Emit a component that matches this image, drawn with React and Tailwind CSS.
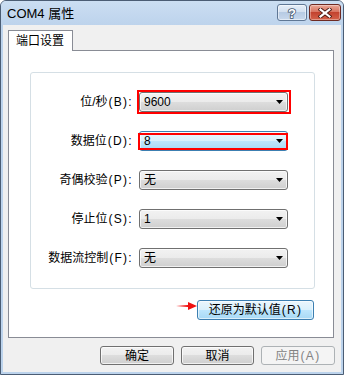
import React from "react";

const btnGray =
  "rounded-[3px] border border-[#707070] bg-[linear-gradient(to_bottom,#f2f2f2_0%,#ebebeb_50%,#dddddd_50%,#cfcfcf_100%)] shadow-[inset_0_0_0_1px_rgba(255,255,255,0.7)]";
const btnBlue =
  "rounded-[3px] border border-[#3c7fb1] bg-[linear-gradient(to_bottom,#eaf6fd_0%,#d9f0fc_50%,#bee6fd_50%,#a7d9f5_100%)] shadow-[inset_0_0_0_1px_rgba(255,255,255,0.6)]";

// half-width part of a label, spaced out like the old bitmap font
function Half({ children }) {
  return <span className="tracking-[1.3px] pl-[1px]">{children}</span>;
}

function Caret() {
  return (
    <svg width="7" height="4" viewBox="0 0 7 4" className="shrink-0">
      <path d="M0 0 H7 L3.5 4 Z" fill="#000" />
    </svg>
  );
}

function Combo({ value, focused }) {
  return (
    <div
      className={`h-[20px] w-[149px] flex items-center justify-between pl-[4px] pr-[4px] text-[12px] text-black ${
        focused ? btnBlue : btnGray
      }`}
    >
      <span className="leading-none">{value}</span>
      <Caret />
    </div>
  );
}

const rows = [
  { label: "位/秒", key: "(B):", value: "9600", mark: "outer" },
  { label: "数据位", key: "(D):", value: "8", focused: true, mark: "inner" },
  { label: "奇偶校验", key: "(P):", value: "无" },
  { label: "停止位", key: "(S):", value: "1" },
  { label: "数据流控制", key: "(F):", value: "无" },
];

export default function App() {
  return (
    <div className="w-[344px] h-[375px] rounded-t-[6px] border border-[#4b5d74] bg-[#bcd3ec] flex flex-col font-['Liberation_Sans','Noto_Sans_CJK_SC',sans-serif] text-black overflow-hidden">
      {/* title bar */}
      <div className="h-[24px] shrink-0 flex items-start pl-[6px] pr-[2px] bg-[linear-gradient(to_bottom,#cbdef2,#bdd3ec)]">
        <span className="self-center text-[13px] leading-none">COM4 属性</span>
        <div className="ml-auto mt-[3px] flex gap-[2px]">
          <div className="w-[30px] h-[17px] rounded-[3px] border border-[#5f7795] bg-[linear-gradient(to_bottom,#e6eef8_0%,#d3e0f0_45%,#b7cbe4_50%,#c8d8ec_100%)] shadow-[inset_0_0_0_1px_rgba(255,255,255,0.5)] flex items-center justify-center">
            <svg width="12" height="14" viewBox="0 0 12 14">
              <text
                x="6"
                y="12"
                textAnchor="middle"
                fontSize="13"
                fontWeight="bold"
                fontFamily="Liberation Sans, sans-serif"
                fill="#fff"
                stroke="#44566e"
                strokeWidth="1.6"
                paintOrder="stroke"
              >
                ?
              </text>
            </svg>
          </div>
          <div className="w-[32px] h-[17px] rounded-[3px] border border-[#6e2a22] bg-[linear-gradient(to_bottom,#e9a796_0%,#d87461_45%,#c3432f_50%,#d4624a_100%)] shadow-[inset_0_0_0_1px_rgba(255,255,255,0.35)] flex items-center justify-center">
            <svg width="14" height="10" viewBox="0 0 14 10">
              <path d="M2.5 1.5 L11.5 8.5 M11.5 1.5 L2.5 8.5" stroke="#4a1a14" strokeWidth="4" strokeLinecap="square" />
              <path d="M2.5 1.5 L11.5 8.5 M11.5 1.5 L2.5 8.5" stroke="#fff" strokeWidth="2.2" strokeLinecap="square" />
            </svg>
          </div>
        </div>
      </div>

      {/* client area */}
      <div className="flex-1 mx-[2px] mb-[2px] bg-[#f0f0f0] pl-[5px] pt-[5px] flex flex-col">
        <div className="relative z-10 -mb-px h-[21px] w-[65px] border border-b-0 border-[#898c95] bg-white flex items-center pl-[7px] text-[12px]">
          端口设置
        </div>
        <div className="w-[326px] h-[288px] border border-[#898c95] bg-white pl-[21px] pt-[21px]">
          <div className="w-[285px] h-[217px] rounded-[3px] border border-[#d5dfe5] pt-[19px]">
            <div className="grid grid-cols-[102px_149px] gap-x-[6px] gap-y-[19px] items-center">
              {rows.map((r) => (
                <React.Fragment key={r.label}>
                  <div className="text-right text-[12px] leading-none whitespace-nowrap">
                    {r.label}
                    <Half>{r.key}</Half>
                  </div>
                  <div className="relative">
                    <Combo value={r.value} focused={r.focused} />
                    {r.mark === "outer" && (
                      <div className="absolute -left-[2px] -top-[2px] -right-[3px] -bottom-[2px] border-2 border-[#ff0000]" />
                    )}
                    {r.mark === "inner" && (
                      <div className="absolute -left-[1px] top-[2px] right-0 bottom-[1px] border-2 border-[#ff0000]" />
                    )}
                  </div>
                </React.Fragment>
              ))}
            </div>
          </div>
          <div className="w-[285px] mt-[11px] flex justify-end">
            <div className="relative mr-[1px]">
              <div className={`w-[117px] h-[20px] flex items-center justify-center text-[12px] ${btnBlue}`}>
                还原为默认值<Half>(R)</Half>
              </div>
              <svg
                width="22"
                height="10"
                viewBox="0 0 22 10"
                className="absolute -left-[21px] top-[1px]"
              >
                <path d="M0 5 L12 4 L12 1 L21 5 L12 9 L12 6 Z" fill="#f01010" />
              </svg>
            </div>
          </div>
        </div>
        <div className="mt-[8px] pr-[6px] flex justify-end gap-[7px]">
          <div className={`w-[74px] h-[19px] flex items-center justify-center text-[12px] ${btnGray}`}>确定</div>
          <div className={`w-[73px] h-[19px] flex items-center justify-center text-[12px] ${btnGray}`}>取消</div>
          <div className="w-[74px] h-[19px] rounded-[3px] border border-[#adb2b5] bg-[#f4f4f4] flex items-center justify-center text-[12px] text-[#838383]">
            应用<Half>(A)</Half>
          </div>
        </div>
      </div>
    </div>
  );
}
